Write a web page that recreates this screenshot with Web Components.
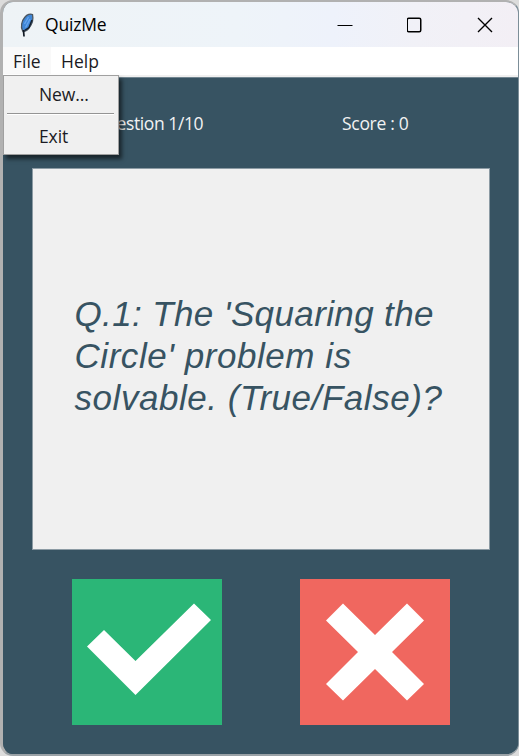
<!DOCTYPE html>
<html lang="en">
<head>
<meta charset="utf-8">
<title>QuizMe</title>
<style>
html,body{margin:0;height:100%;background:#dcdcdc;overflow:hidden}
body{font-family:"Open Sans","Noto Sans",sans-serif}
</style>
</head>
<body>
<app-window>
  <title-bar slot="title">QuizMe</title-bar>
  <menu-bar slot="menu">
    <menu-item active style="--sp:0px">File<drop-menu slot="popup"><menu-entry style="--sp:-.1px">New...</menu-entry><menu-divider></menu-divider><menu-entry style="--sp:-.1px">Exit</menu-entry></drop-menu></menu-item>
    <menu-item style="--sp:0px">Help</menu-item>
  </menu-bar>
  <quiz-board></quiz-board>
</app-window>
<script>
const define = (name, markup) => {
  const t = document.createElement('template');
  t.innerHTML = markup;
  customElements.define(name, class extends HTMLElement {
    constructor() {
      super();
      this.attachShadow({mode: 'open'}).append(t.content.cloneNode(true));
    }
  });
};

define('app-window', `<style>
:host{display:grid;grid-template-rows:45px 30px 1fr;box-sizing:border-box;width:519px;height:756px;
border:solid #b1b1b1;border-width:2px 1px 2px 3px;border-right-color:#7c8e98;border-bottom-color:#9aa2a7;border-radius:13px;overflow:hidden;background:#375362}
</style><slot name="title"></slot><slot name="menu"></slot><slot></slot>`);

define('title-bar', `<style>
:host{display:flex;align-items:center;background:linear-gradient(90deg,#eef3f6 0,#eef4f9 45%,#eef2fb 64%,#f1f1f7 80%,#f3eff5 100%);color:#000}
.logo{margin-left:15px;width:18px;height:26px;flex:none}
.name{flex:1;margin-left:9px;font-size:17.5px;line-height:24px;letter-spacing:-.2px;padding-bottom:2px}
.controls{display:flex;gap:54px;padding-right:26px}
.controls svg{width:16px;height:16px;display:block}
</style>
<svg class="logo" viewBox="0 0 18 26"><path d="M4.500 18.500C2.500 15 3.500 9 7 5C9 2.500 12.500 1.500 14.500 2.500C15.500 7 14 12.500 11 16C9 18.500 6.500 19.500 5 19.500Z" fill="#3f86d6" stroke="#4b5661" stroke-width="1.300"/><path d="M6 24.500L5.500 18" fill="none" stroke="#111923" stroke-width="1.700"/><path d="M6.500 18.500L11 15.500 14 8" fill="none" stroke="#14202e" stroke-width="1.500"/><path d="M6.500 12L10.500 5M7.500 15.500L12 7" stroke="#65a5ee" stroke-width="1.400"/></svg>
<span class="name"><slot></slot></span>
<span class="controls">
<svg viewBox="0 0 16 16"><path d="M.5 8.500H15.500" stroke="#000" stroke-width="1.200"/></svg>
<svg viewBox="0 0 16 16"><rect x=".25" y="1.250" width="13.500" height="13.500" rx="1.500" fill="none" stroke="#000" stroke-width="1.500"/></svg>
<svg viewBox="0 0 16 16"><path d="M1 1L15 15M15 1L1 15" stroke="#000" stroke-width="1.400"/></svg>
</span>`);

define('menu-bar', `<style>
:host{display:flex;align-items:stretch;box-sizing:border-box;background:#fff;border-bottom:2px solid #f0f0f0;padding-bottom:1px}
</style><slot></slot>`);

define('menu-item', `<style>
:host{display:block;position:relative;box-sizing:border-box;padding:0 10px;font-size:17.500px;line-height:29px;letter-spacing:var(--sp);color:#1b1b1f;width:48px;height:27px;white-space:nowrap}
:host([active]){background:#f9f9f9}
::slotted(drop-menu){position:absolute;left:0;top:28px;z-index:2}
</style><slot></slot><slot name="popup"></slot>`);

define('drop-menu', `<style>
:host{display:flex;flex-direction:column;box-sizing:border-box;width:116px;height:80px;background:#f0f0f0;border:1px solid #a0a0a0;box-shadow:3px 4px 4px rgba(0,0,0,.55);padding:2px 3px}
</style><slot></slot>`);

define('menu-entry', `<style>
:host{display:block;flex:none;height:33px;line-height:33px;padding-left:32px;font-size:17.500px;letter-spacing:var(--sp);color:#1b1b24}
</style><slot></slot>`);

define('menu-divider', `<style>
:host{display:block;flex:none;height:1px;background:#949494;border-bottom:1px solid #fff;margin:2px 1px 5px 0}
</style>`);

define('answer-button', `<style>
:host{display:block;width:150px;height:146px;background:var(--c)}
</style><slot></slot>`);

define('quiz-board', `<style>
:host{display:grid;grid-template-rows:90px 381px 1fr;padding:0 29px;background:#375362;border-top:1px solid #718590;box-sizing:border-box}
.status{display:grid;grid-template-columns:228px 228px;color:#f2f2f2;font-size:17.500px;line-height:24px;padding-top:33px}
.status span{white-space:nowrap}
.q{padding-left:61px;letter-spacing:-.4px}
.s{padding-left:82px;letter-spacing:-.3px}
.card{background:#f0f0f0;display:flex;align-items:center;padding-left:41.500px;border:1px solid #8c9ba4;box-sizing:border-box;width:458px;height:382px}
p{margin:0;padding-bottom:6px;font:italic 35px/42px "Liberation Sans",Arial,sans-serif;color:#375362;white-space:nowrap;letter-spacing:.55px}
p span:first-child{letter-spacing:.38px}
.answers{display:flex;gap:78px;padding:30px 0 0 40px}
svg{display:block;width:150px;height:146px}
</style>
<div class="status"><span class="q">Question 1/10</span><span class="s">Score : 0</span></div>
<div class="card"><p><span>Q.1: The 'Squaring the</span><br><span>Circle' problem is</span><br><span>solvable. (True/False)?</span></p></div>
<div class="answers">
<answer-button style="--c:#2bb677"><svg viewBox="0 0 150 146"><path d="M15 67.500L32 51 63.500 82 122 24.500 139 41 63.500 116Z" fill="#fff"/></svg></answer-button>
<answer-button style="--c:#f0675f"><svg viewBox="0 0 150 146"><path d="M26 41.500L43 24.500 75 56 107 24.500 124 41.500 92 73 124 105 107 121.500 75 90 43 121.500 26 105 58 73Z" fill="#fff"/></svg></answer-button>
</div>`);
</script>
</body>
</html>
